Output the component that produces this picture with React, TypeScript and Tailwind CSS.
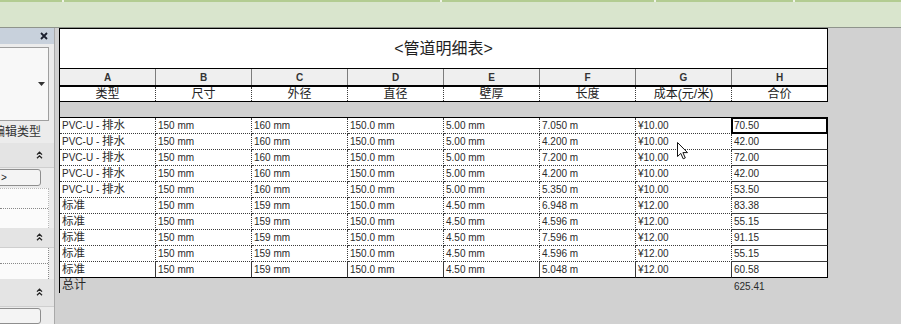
import React from "react";

type Row = {
  a: [string, string];
  b: string;
  c: string;
  d: string;
  e: string;
  f: string;
  g: string;
  h: string;
};

const rows: Row[] = [
  { a: ["PVC-U - ", "排水"], b: "150 mm", c: "160 mm", d: "150.0 mm", e: "5.00 mm", f: "7.050 m", g: "¥10.00", h: "70.50" },
  { a: ["PVC-U - ", "排水"], b: "150 mm", c: "160 mm", d: "150.0 mm", e: "5.00 mm", f: "4.200 m", g: "¥10.00", h: "42.00" },
  { a: ["PVC-U - ", "排水"], b: "150 mm", c: "160 mm", d: "150.0 mm", e: "5.00 mm", f: "7.200 m", g: "¥10.00", h: "72.00" },
  { a: ["PVC-U - ", "排水"], b: "150 mm", c: "160 mm", d: "150.0 mm", e: "5.00 mm", f: "4.200 m", g: "¥10.00", h: "42.00" },
  { a: ["PVC-U - ", "排水"], b: "150 mm", c: "160 mm", d: "150.0 mm", e: "5.00 mm", f: "5.350 m", g: "¥10.00", h: "53.50" },
  { a: ["", "标准"], b: "150 mm", c: "159 mm", d: "150.0 mm", e: "4.50 mm", f: "6.948 m", g: "¥12.00", h: "83.38" },
  { a: ["", "标准"], b: "150 mm", c: "159 mm", d: "150.0 mm", e: "4.50 mm", f: "4.596 m", g: "¥12.00", h: "55.15" },
  { a: ["", "标准"], b: "150 mm", c: "159 mm", d: "150.0 mm", e: "4.50 mm", f: "7.596 m", g: "¥12.00", h: "91.15" },
  { a: ["", "标准"], b: "150 mm", c: "159 mm", d: "150.0 mm", e: "4.50 mm", f: "4.596 m", g: "¥12.00", h: "55.15" },
  { a: ["", "标准"], b: "150 mm", c: "159 mm", d: "150.0 mm", e: "4.50 mm", f: "5.048 m", g: "¥12.00", h: "60.58" },
];

const letters = ["A", "B", "C", "D", "E", "F", "G", "H"];
const headers = ["类型", "尺寸", "外径", "直径", "壁厚", "长度", "成本(元/米)", "合价"];

function Chevrons() {
  return (
    <svg width="7" height="8" viewBox="0 0 7 8">
      <path d="M1 3.6 L3.5 1.2 L6 3.6 M1 7.2 L3.5 4.8 L6 7.2" stroke="#222" strokeWidth="1.3" fill="none" />
    </svg>
  );
}

function SectionHeader({ h }: { h: string }) {
  return (
    <div className={`${h} flex items-center justify-end pr-[11px] bg-[#e4e4e4] border-b border-[#cfcfcf]`}>
      <Chevrons />
    </div>
  );
}

function SidePanel() {
  return (
    <div className="w-[55px] h-full shrink-0 bg-[#ececec] border-r border-[#a9a9a9] overflow-hidden flex flex-col">
      {/* palette header */}
      <div className="h-[17px] bg-[#c8d1dc] flex items-center justify-end pr-[6px]">
        <svg width="8" height="8" viewBox="0 0 8 8">
          <path d="M1 1 L7 7 M7 1 L1 7" stroke="#1b1f2e" strokeWidth="1.8" />
        </svg>
      </div>
      {/* type selector */}
      <div className="mt-[3px] h-[76px] w-[49px] bg-[#f8f8f8] border-t border-r border-b border-[#9f9f9f] flex items-center justify-end pr-[3px]">
        <svg width="7" height="4" viewBox="0 0 7 4">
          <path d="M0 0 L7 0 L3.5 4 Z" fill="#333" />
        </svg>
      </div>
      <div className="h-[23px] flex items-center justify-end pr-[13px] text-[12px] text-[#333] whitespace-nowrap">
        编辑类型
      </div>
      <SectionHeader h="h-[26px]" />
      <div className="h-[17px] mt-[1px] w-[47px] -ml-[6px] rounded-[3px] border border-[#8e8e8e] bg-[#f4f4f4] flex items-center pl-[6px] text-[10px] text-[#222]">
        &gt;
      </div>
      <div className="mt-[2px] w-[49px] bg-[#fbfbfb] border-t border-[#b9b9b9] border-r border-dotted">
        <div className="h-[20px] border-b border-dotted border-[#888]" />
        <div className="h-[19px]" />
      </div>
      <SectionHeader h="h-[20px]" />
      <div className="w-[49px] bg-[#fbfbfb] border-r border-dotted border-[#888]">
        <div className="h-[16px] border-b border-dotted border-[#888]" />
        <div className="h-[15px]" />
      </div>
      <SectionHeader h="h-[29px]" />
      <div className="h-[17px] mt-[1px] w-[47px] -ml-[6px] rounded-[3px] border border-[#8e8e8e] bg-[#f4f4f4]" />
    </div>
  );
}

function DataCell({ last, bottom, children, selected }: { last: boolean; bottom: boolean; children: React.ReactNode; selected?: boolean }) {
  const right = last ? "border-r border-solid border-r-black" : "border-r border-dotted border-r-[#3a3a3a]";
  const btm = bottom ? "border-b border-solid border-b-black" : "border-b border-dotted border-b-[#3a3a3a]";
  return (
    <div className={`relative h-[16px] pl-[2px] leading-[15px] whitespace-nowrap ${right} ${btm}`}>
      {children}
      {selected && <div className="absolute -left-[1px] -top-[1px] -right-[1px] -bottom-[1px] border-2 border-black" />}
    </div>
  );
}

function Schedule() {
  return (
    <div className="ml-[4px] w-[769px] border-l border-black self-start text-[#2a2a2a]">
      {/* title */}
      <div className="h-[41px] border-t border-b border-r border-black bg-white flex items-center justify-center text-[16px] text-[#1e1e1e]">
        &lt;管道明细表&gt;
      </div>
      {/* column letters */}
      <div className="grid grid-cols-[repeat(8,96px)] h-[18px] border-b-2 border-black bg-[#efefef]">
        {letters.map((l, i) => (
          <div
            key={l}
            className={`flex items-center justify-center text-[10px] font-bold text-[#333] border-r ${i === 7 ? "border-black" : "border-[#7d7d7d]"}`}
          >
            {l}
          </div>
        ))}
      </div>
      {/* column names */}
      <div className="grid grid-cols-[repeat(8,96px)] h-[15px] border-b border-black bg-white">
        {headers.map((h, i) => (
          <div
            key={h}
            className={`flex items-center justify-center text-[12px] leading-[14px] text-[#222] border-r ${i === 7 ? "border-solid border-black" : "border-dotted border-[#3a3a3a]"}`}
          >
            {h}
          </div>
        ))}
      </div>
      {/* blank group row */}
      <div className="h-[16px] border-b border-black" />
      {/* data */}
      <div className="bg-white text-[10px]">
        {rows.map((r, ri) => {
          const bottom = ri === rows.length - 1;
          const vals = [r.b, r.c, r.d, r.e, r.f, r.g, r.h];
          return (
            <div key={ri} className="grid grid-cols-[repeat(8,96px)]">
              <DataCell last={false} bottom={bottom}>
                {r.a[0]}
                <span className="text-[11.5px] leading-[15px]">{r.a[1]}</span>
              </DataCell>
              {vals.map((v, ci) => (
                <DataCell key={ci} last={ci === 6} bottom={bottom} selected={ri === 0 && ci === 6}>
                  {v}
                </DataCell>
              ))}
            </div>
          );
        })}
      </div>
      {/* total */}
      <div className="grid grid-cols-[repeat(8,96px)] h-[15px] text-[#2a2a2a]">
        <div className="pl-[2px] text-[12px] leading-[15px]">总计</div>
        <div className="col-start-8 pl-[2px] text-[10px] leading-[17px]">625.41</div>
      </div>
    </div>
  );
}

export default function App() {
  return (
    <div className="relative w-[901px] h-[324px] overflow-hidden bg-[#d1d1d1] font-['Liberation_Sans','Noto_Sans_CJK_SC',sans-serif]">
      {/* ribbon edge */}
      <div className="h-[28px] bg-[#d9e5cd] border-b border-[#8f948c]">
        <div className="h-[2px] bg-[#b3cc92] flex">
          <div className="w-[62px]" />
          <div className="w-[2px] bg-[#eef3e6]" />
          <div className="w-[376px]" />
          <div className="w-[2px] bg-[#eef3e6]" />
          <div className="w-[212px]" />
          <div className="w-[2px] bg-[#eef3e6]" />
          <div className="w-[137px]" />
          <div className="w-[2px] bg-[#eef3e6]" />
        </div>
      </div>
      <div className="flex h-[296px]">
        <SidePanel />
        <Schedule />
      </div>
      {/* mouse pointer */}
      <svg className="absolute left-[677px] top-[142px]" width="12" height="18" viewBox="0 0 12 18">
        <path d="M0.5 0.5 L0.5 14.5 L3.8 11.4 L6.2 16.8 L8.3 15.9 L5.9 10.6 L10.5 10.6 Z" fill="#fff" stroke="#111" strokeWidth="1" />
      </svg>
    </div>
  );
}
